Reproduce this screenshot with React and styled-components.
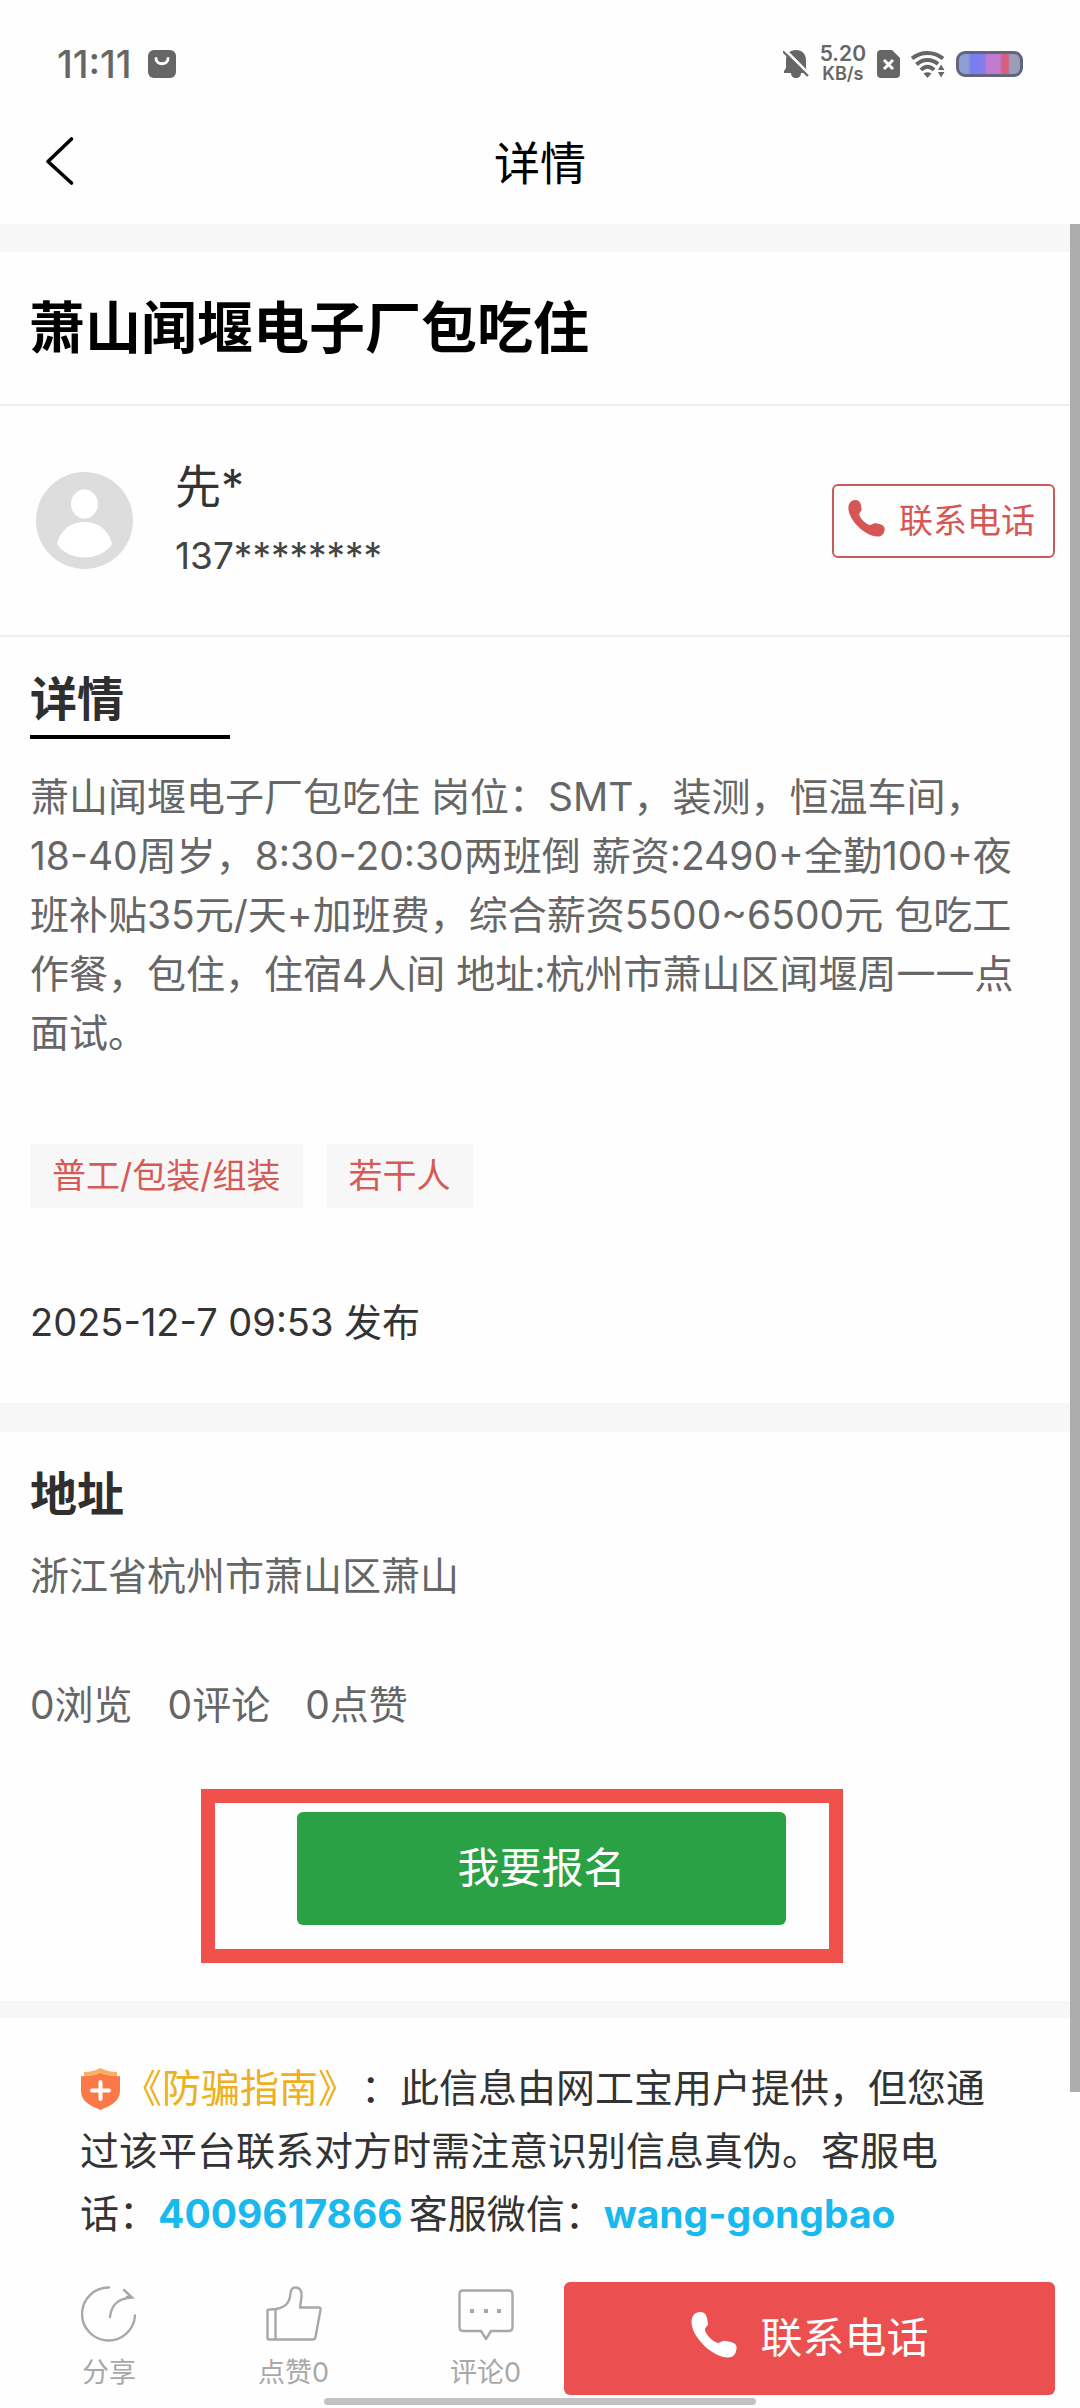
import React from 'react'
import styled, { createGlobalStyle } from 'styled-components'

const GlobalStyle = createGlobalStyle`
  * {
    box-sizing: border-box;
  }

  body {
    margin: 0;
    background: #fefefe;
    color: #333;
    font-family: Inter, 'Noto Sans CJK SC', sans-serif;
    text-spacing-trim: space-all;
  }

  h1, h2, p {
    margin: 0;
  }

  button {
    font-family: inherit;
    cursor: pointer;
  }

  a {
    text-decoration: none;
  }

  svg {
    display: block;
    flex: none;
  }
`

const Page = styled.div`
  display: flex;
  flex-direction: column;
  min-height: 100vh;
`

const StatusBar = styled.div`
  display: flex;
  align-items: center;
  justify-content: space-between;
  height: 98px;
  padding: 30px 57px 0;
  color: #666;
`

const StatusGroup = styled.div`
  display: flex;
  align-items: center;
  gap: ${props => props.$gap}px;
`

const Clock = styled.span`
  font-size: 38px;
  font-weight: 500;
`

const NetSpeed = styled.span`
  display: flex;
  flex-direction: column;
  align-items: center;
  font-size: 18px;
  font-weight: 600;
  line-height: 20px;
`

const SpeedValue = styled.span`
  font-size: 21px;
`

const Battery = styled.span`
  width: 67px;
  height: 26px;
  border: 3px solid #62657c;
  border-radius: 9px;
  background: linear-gradient(
    to right,
    #8c9fd2 0 14%,
    #7c7cf2 20% 34%,
    #8c7ce4 42%,
    #c07ad2 46% 66%,
    #d8607c 72% 80%,
    #9a9db8 84%
  );
`

const NavBar = styled.header`
  display: grid;
  grid-template-columns: 1fr auto 1fr;
  align-items: center;
  height: 126px;
  padding: 0 44px;
  color: #000;
`

const BackButton = styled.button`
  justify-self: start;
  padding: 0;
  border: 0;
  background: none;
  color: inherit;
`

const NavTitle = styled.span`
  padding-top: 4px;
  font-size: 46px;
  line-height: 64px;
`

const Main = styled.main`
  position: relative;
  flex: 1;
`

const ScrollThumb = styled.div`
  position: absolute;
  top: 0;
  right: 0;
  width: 10px;
  height: 91%;
  background: #adadad;
`

const Band = styled.div`
  height: ${props => props.$size}px;
  background: #f7f7f7;
`

const JobTitle = styled.h1`
  padding: 38px 29px;
  border-bottom: 2px solid #eee;
  color: #000;
  font-size: 56px;
  line-height: 76px;
`

const Publisher = styled.section`
  display: flex;
  align-items: center;
  height: 231px;
  padding: 0 25px 0 36px;
  border-bottom: 2px solid #eee;
`

const PublisherInfo = styled.div`
  display: flex;
  flex: 1;
  flex-direction: column;
  gap: 6px;
  margin-left: 42px;
`

const Name = styled.span`
  font-size: 46px;
  line-height: 64px;
`

const Phone = styled.span`
  color: #444;
  font-size: 37px;
  line-height: 64px;
`

const OutlineButton = styled.button`
  display: flex;
  align-items: center;
  gap: 14px;
  height: 74px;
  padding: 0 18px 4px 14px;
  border: 2px solid #c9595c;
  border-radius: 6px;
  background: none;
  color: #d65654;
  font-size: 34px;
`

const Section = styled.section`
  padding: ${props => props.$padding};
`

const Heading = styled.h2`
  color: #2f2f2f;
  font-size: 47px;
  line-height: 64px;
`

const Rule = styled.div`
  width: 200px;
  height: 4px;
  margin-top: 4px;
  background: #000;
`

const Text = styled.p`
  margin-top: ${props => props.$space}px;
  color: #666;
  font-size: 39px;
  line-height: 59px;
`

const Tags = styled.div`
  display: flex;
  gap: 24px;
  margin-top: 82px;
`

const Tag = styled.span`
  padding: 0 22px;
  background: #f7f7f7;
  color: #d65a56;
  font-size: 34px;
  line-height: 64px;
`

const PublishTime = styled.p`
  margin-top: 82px;
  font-size: 38px;
  line-height: 64px;
`

const Stats = styled.div`
  display: flex;
  gap: 35px;
  margin-top: 70px;
  color: #666;
  font-size: 39px;
  line-height: 60px;
`

const ApplyFrame = styled.div`
  width: 642px;
  max-width: 100%;
  margin: 54px 0 0 171px;
  padding: 9px 43px 24px 82px;
  border: 14px solid #f0524b;
`

const ApplyButton = styled.button`
  display: block;
  width: 100%;
  height: 113px;
  padding: 0 0 8px;
  border: 0;
  border-radius: 6px;
  background: #2ba145;
  color: #fff;
  font-size: 42px;
`

const Notice = styled.p`
  padding: 38px 80px 26px;
  font-size: 39px;
  line-height: 63px;

  svg {
    display: inline-block;
    margin-right: 2px;
    vertical-align: -8px;
  }
`

const GuideLink = styled.a`
  margin-right: 4px;
  color: #eeb020;
`

const ContactLink = styled.a`
  margin-right: 6px;
  color: #17b9ee;
  font-weight: 700;
`

const BottomBar = styled.footer`
  display: flex;
  align-items: center;
  padding: 5px 25px 0 81px;
`

const Actions = styled.div`
  display: flex;
  gap: 121px;
  margin-right: 43px;
`

const ActionButton = styled.button`
  display: flex;
  flex-direction: column;
  align-items: center;
  gap: 12px;
  padding: 0;
  border: 0;
  background: none;
  color: #a8a8a8;
  font-size: 27px;
  line-height: 38px;
  white-space: nowrap;
`

const CallButton = styled.button`
  display: flex;
  flex: 1;
  align-items: center;
  justify-content: center;
  gap: 24px;
  height: 113px;
  padding: 0 0 8px;
  border: 0;
  border-radius: 6px;
  background: #eb4f4f;
  color: #fff;
  font-size: 42px;
`

const HomeIndicator = styled.div`
  width: 40%;
  height: 7px;
  margin: 3px auto;
  border-radius: 4px;
  background: #c2c2c4;
`

const BagIcon = () => (
  <svg width="28" height="28" viewBox="0 0 28 28">
    <rect width="28" height="28" rx="6" fill="#666" />
    <path d="M8 8.500C8 15.500 20 15.500 20 8.500" fill="none" stroke="#fff" strokeWidth="3" strokeLinecap="round" />
  </svg>
)

const MutedBellIcon = () => (
  <svg width="26" height="28" viewBox="0 0 26 28">
    <path d="M13 0C7 0 3 4 3 10V18L1 21V23H8C8 26 10 28 13 28S18 26 18 23H24V21L23 18V10C23 4 19 0 13 0Z" fill="#666" />
    <path d="M2 0L26 24" stroke="#fefefe" strokeWidth="3" />
    <path d="M0 1.500L25 26" stroke="#666" strokeWidth="2.200" />
  </svg>
)

const NoSimIcon = () => (
  <svg width="23" height="28" viewBox="0 0 23 28">
    <path d="M4 0H15L23 8V24Q23 28 19 28H4Q0 28 0 24V4Q0 0 4 0Z" fill="#666" />
    <path d="M7 10L16 19M16 10L7 19" stroke="#fff" strokeWidth="3" />
  </svg>
)

const WifiIcon = () => (
  <svg width="34" height="28" viewBox="0 0 34 28">
    <g fill="none" stroke="#666" strokeWidth="4">
      <path d="M1 8.500C10 1 23 1 32 8.500" />
      <path d="M5.500 14.500C12 8.500 21 8.500 27 14" />
      <path d="M10 20C14 15.500 19 15.500 23 20" />
    </g>
    <path d="M12.500 23.500Q16.500 21 20.500 23.500L16.500 28Z" fill="#666" />
    <path d="M27 20L30 14.500L33.500 20ZM27 22H33.500L30 27.500Z" fill="#666" />
  </svg>
)

const BackIcon = () => (
  <svg width="32" height="50" viewBox="0 0 32 50">
    <path d="M27.500 3L4 25.500L27.500 47" fill="none" stroke="currentColor" strokeWidth="3.600" strokeLinecap="round" strokeLinejoin="round" />
  </svg>
)

const AvatarIcon = () => (
  <svg width="97" height="97" viewBox="0 0 97 97">
    <circle cx="48.500" cy="48.500" r="48.500" fill="#ddd" />
    <ellipse cx="48.500" cy="32" rx="13.500" ry="14.500" fill="#fff" />
    <path d="M21 72C24 58 35 50 48.500 50S73 58 76 72C70 81 59 85.500 48.500 85.500S27 81 21 72Z" fill="#fff" />
  </svg>
)

const PhoneIcon = ({ size }) => (
  <svg width={size} height={size} viewBox="0 0 46 46">
    <path
      d="M0.500 10C0.500 4 4 0 9 0C13 0 15 2 16 6L17 12C17 14 14 15 14 18C15 23 22 30 27 31C30 31 31 28 35 29L40 30C44 31 46 33 45.500 37C45 42 42 45.500 37 45.500C20 45 0.500 24 0.500 10Z"
      fill="currentColor"
    />
  </svg>
)

const ShieldIcon = () => (
  <svg width="41" height="42" viewBox="0 0 41 42">
    <path d="M4 4Q13 4 20.500 0Q28 4 37 4V14H4Z" fill="#fbaf62" />
    <path d="M1 8Q12 9 20.500 5Q29 9 40 8V23C40 32 33 37 20.500 42C8 37 1 32 1 23Z" fill="#fb7849" />
    <path d="M20.500 14V31M12 22.500H29" stroke="#fff" strokeWidth="4" strokeLinecap="round" />
  </svg>
)

const ShareIcon = () => (
  <svg width="56" height="56" viewBox="0 0 56 56" fill="none" stroke="currentColor" strokeWidth="2.400" strokeLinecap="round">
    <path d="M28 1.500A26.500 26.500 0 1 0 54 29.500" />
    <path d="M29 31C30 19 38 12 51 11.500L43 4M51 11.500L46 11" />
  </svg>
)

const ThumbIcon = () => (
  <svg width="56" height="56" viewBox="0 0 56 56" fill="none" stroke="currentColor" strokeWidth="2.400" strokeLinejoin="round">
    <path d="M1.500 24Q7 23 10 23C22 21 24 14 24.500 7C25 3 27 1.500 29.500 1.500C34 1.500 36 5 35.500 11L34 21.500H53Q55 21.500 54.500 24L49.500 51Q49 53.500 47 53.500H3Q1.500 53.500 1.500 51.500ZM9.500 23V53" />
  </svg>
)

const CommentIcon = () => (
  <svg width="56" height="56" viewBox="0 0 56 56" fill="none" stroke="currentColor" strokeWidth="2.400" strokeLinejoin="round">
    <path d="M5 4.500H51Q54.500 4.500 54.500 8V41Q54.500 45 51 45H33L28 53L23 45H5Q1.500 45 1.500 41V8Q1.500 4.500 5 4.500Z" />
    <path d="M12 25H16M26 25H30M39 25H43" strokeWidth="4" />
  </svg>
)

const tags = ['普工/包装/组装', '若干人']
const stats = ['0浏览', '0评论', '0点赞']
const actions = [
  { label: '分享', Icon: ShareIcon },
  { label: '点赞0', Icon: ThumbIcon },
  { label: '评论0', Icon: CommentIcon },
]

const App = () => (
  <>
    <GlobalStyle />
    <Page>
      <StatusBar>
        <StatusGroup $gap={16}>
          <Clock>11:11</Clock>
          <BagIcon />
        </StatusGroup>
        <StatusGroup $gap={11}>
          <MutedBellIcon />
          <NetSpeed>
            <SpeedValue>5.20</SpeedValue>
            KB/s
          </NetSpeed>
          <NoSimIcon />
          <WifiIcon />
          <Battery />
        </StatusGroup>
      </StatusBar>
      <NavBar>
        <BackButton type="button" aria-label="返回"><BackIcon /></BackButton>
        <NavTitle>详情</NavTitle>
      </NavBar>

      <Main>
        <Band $size={28} />
        <JobTitle>萧山闻堰电子厂包吃住</JobTitle>
        <Publisher>
          <AvatarIcon />
          <PublisherInfo>
            <Name>先*</Name>
            <Phone>137********</Phone>
          </PublisherInfo>
          <OutlineButton type="button">
            <PhoneIcon size={37} />
            联系电话
          </OutlineButton>
        </Publisher>

        <Section $padding="30px 50px 49px 30px">
          <Heading>详情</Heading>
          <Rule />
          <Text $space={28}>
            萧山闻堰电子厂包吃住 岗位：SMT，装测，恒温车间，18-40周岁，8:30-20:30两班倒 薪资:2490+全勤100+夜班补贴35元/天+加班费，综合薪资5500~6500元 包吃工作餐，包住，住宿4人间 地址:杭州市萧山区闻堰周一一点面试。
          </Text>
          <Tags>
            {tags.map(tag => <Tag key={tag}>{tag}</Tag>)}
          </Tags>
          <PublishTime>2025-12-7 09:53 发布</PublishTime>
        </Section>

        <Band $size={29} />
        <Section $padding="30px 30px 38px">
          <Heading>地址</Heading>
          <Text $space={20}>浙江省杭州市萧山区萧山</Text>
          <Stats>
            {stats.map(stat => <span key={stat}>{stat}</span>)}
          </Stats>
          <ApplyFrame>
            <ApplyButton type="button">我要报名</ApplyButton>
          </ApplyFrame>
        </Section>

        <Band $size={17} />
        <Notice>
          <ShieldIcon />
          <GuideLink href="#guide">《防骗指南》</GuideLink>
          ：此信息由网工宝用户提供，但您通过该平台联系对方时需注意识别信息真伪。客服电话：
          <ContactLink href="tel:4009617866">4009617866</ContactLink>
          客服微信：
          <ContactLink href="#wechat">wang-gongbao</ContactLink>
        </Notice>
        <ScrollThumb />
      </Main>

      <BottomBar>
        <Actions>
          {actions.map(({ label, Icon }) => (
            <ActionButton type="button" key={label}>
              <Icon />
              {label}
            </ActionButton>
          ))}
        </Actions>
        <CallButton type="button">
          <PhoneIcon size={46} />
          联系电话
        </CallButton>
      </BottomBar>
      <HomeIndicator />
    </Page>
  </>
)

export default App
